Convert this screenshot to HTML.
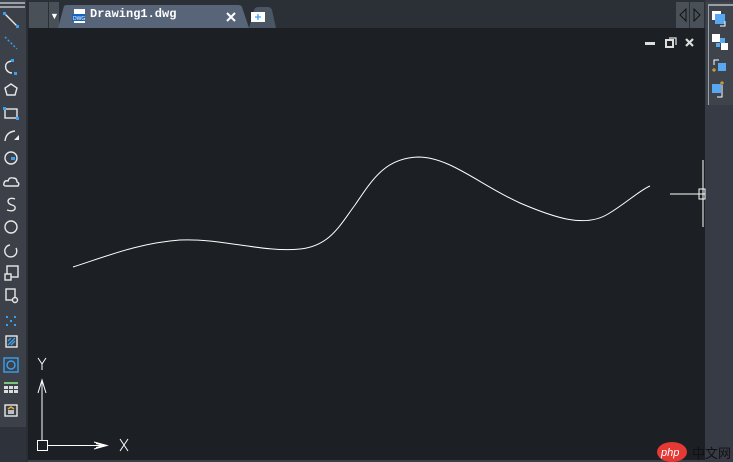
<!DOCTYPE html>
<html><head><style>
body{margin:0;width:733px;height:462px;overflow:hidden;background:#1c1f23;position:relative;font-family:"Liberation Sans",sans-serif}
.a{position:absolute}
</style></head><body>
<!-- left toolbar -->
<div class="a" style="left:0;top:0;width:26px;height:462px;background:#2e333b"></div>
<div class="a" style="left:0;top:0;width:26px;height:427px;background:#3c4149"></div>
<div class="a" style="left:0;top:2px;width:25px;height:2px;background:#9aa0a8"></div>
<div class="a" style="left:0;top:6px;width:25px;height:2px;background:#9aa0a8"></div>
<div class="a" style="left:26px;top:0;width:2px;height:462px;background:#2a2e35"></div>
<svg class="a" style="left:0;top:0" width="26" height="427" fill="none" stroke="#e8e8e8" stroke-width="1.4">
<line x1="5" y1="14" x2="17" y2="26"/><rect x="3" y="12" width="3" height="3" fill="#3aa0f0" stroke="none"/><rect x="16" y="25" width="3" height="3" fill="#3aa0f0" stroke="none"/>
<line x1="5" y1="37" x2="17" y2="49" stroke-dasharray="2 2" stroke="#3aa0f0"/>
<path d="M12 61 Q4 62 6 69 Q8 73 12 73"/><rect x="11" y="59" width="3" height="3" fill="#3aa0f0" stroke="none"/><rect x="14" y="72" width="3" height="3" fill="#3aa0f0" stroke="none"/>
<path d="M11 84 L17 88 L15 95 L7 95 L5 88 Z"/>
<rect x="5" y="109" width="12" height="9"/><rect x="3" y="107" width="3" height="3" fill="#3aa0f0" stroke="none"/><rect x="16" y="117" width="3" height="3" fill="#3aa0f0" stroke="none"/>
<path d="M5 141 Q6 132 15 131"/><path d="M14 140 L19 140 L19 135 Z" fill="#eee" stroke="none"/>
<circle cx="11" cy="158" r="6"/><rect x="11" y="157" width="4" height="3" fill="#3aa0f0" stroke="none"/>
<path d="M6 186 Q3 186 4 183 Q5 180 8 181 Q9 177 13 178 Q17 178 17 182 Q20 183 18 186 Z"/>
<path d="M15 199 Q9 197 8 201 Q8 204 12 205 Q16 206 15 209 Q13 212 7 210"/>
<ellipse cx="11" cy="227" rx="6" ry="6"/>
<path d="M16 248 A6 6 0 1 1 10 245"/>
<rect x="7" y="266" width="11" height="11"/><rect x="5" y="274" width="6" height="6" fill="#3c4149"/>
<rect x="6" y="289" width="9" height="11"/><circle cx="15" cy="300" r="2.5" fill="#3c4149"/>
<g fill="#3aa0f0" stroke="none"><rect x="6" y="316" width="2" height="2"/><rect x="14" y="316" width="2" height="2"/><rect x="10" y="320" width="2" height="2"/><rect x="6" y="324" width="2" height="2"/><rect x="14" y="324" width="2" height="2"/></g>
<rect x="6" y="336" width="11" height="11"/><path d="M8 345 L15 338 M8 341 L11 338 M11 345 L15 341" stroke="#3aa0f0"/>
<rect x="4" y="358" width="14" height="14" stroke="#3aa0f0"/><circle cx="11" cy="365" r="4" stroke="#3aa0f0"/>
<rect x="4" y="382" width="14" height="2" fill="#7cc47c" stroke="none"/>
<g fill="#ddd" stroke="none"><rect x="4" y="386" width="4" height="3"/><rect x="9" y="386" width="4" height="3"/><rect x="14" y="386" width="4" height="3"/><rect x="4" y="390" width="4" height="3"/><rect x="9" y="390" width="4" height="3"/><rect x="14" y="390" width="4" height="3"/></g>
<rect x="5" y="405" width="12" height="11"/><path d="M8 411h6M8 413h6" /><path d="M8 409 L11 407 L14 409" stroke="#f0b030"/>
</svg>
<!-- top tab bar -->
<div class="a" style="left:28px;top:0;width:677px;height:28px;background:#2b2f36"></div>
<div class="a" style="left:29px;top:2px;width:19px;height:26px;background:#4a5058"></div>
<div class="a" style="left:49px;top:2px;width:10px;height:26px;background:#4a5058"></div>
<div class="a" style="left:50px;top:11px;color:#fff;font-size:9px">▼</div>
<svg class="a" style="left:58px;top:4px" width="220" height="24">
<path d="M0 24 L6 2 Q7 1 9 1 L180 1 Q183 1 184 3 L191 24 Z" fill="#586579"/>
<path d="M191 24 L196 6 Q197 3 200 3 L210 3 Q213 3 214 6 L218 24 Z" fill="#4a5664"/>
<rect x="16" y="5" width="11" height="14" fill="#fff"/><rect x="14" y="10" width="13" height="7" fill="#1565c0"/>
<text x="15" y="16" font-size="5" fill="#fff" font-family="Liberation Sans">DWG</text>
<path d="M169 9 L177 17 M177 9 L169 17" stroke="#fff" stroke-width="2"/>
<rect x="193" y="8" width="14" height="10" fill="#fff"/><path d="M200 10 V16 M197 13 H203" stroke="#3aa0f0" stroke-width="1.3"/>
</svg>
<div class="a" style="left:90px;top:7px;color:#fff;font-size:12px;font-weight:bold;font-family:'Liberation Mono',monospace;letter-spacing:0px">Drawing1.dwg</div>
<!-- right of tabbar -->
<div class="a" style="left:676px;top:2px;width:13px;height:26px;background:#4a5058"></div>
<div class="a" style="left:690px;top:2px;width:14px;height:26px;background:#4a5058"></div>
<svg class="a" style="left:676px;top:2px" width="30" height="26" fill="none" stroke="#111" stroke-width="1"><path d="M10 7 L4 13 L10 19 Z"/><path d="M18 7 L24 13 L18 19 Z"/></svg>
<!-- window controls -->
<svg class="a" style="left:640px;top:34px" width="60" height="16">
<rect x="5" y="8" width="10" height="3" fill="#ddd"/>
<rect x="26" y="6" width="7" height="7" fill="none" stroke="#ddd" stroke-width="2"/><path d="M29 4 H36 V11" fill="none" stroke="#ddd" stroke-width="1.3"/>
<path d="M46 5 L53 12 M53 5 L46 12" stroke="#ddd" stroke-width="2.2"/>
</svg>
<!-- right panel -->
<div class="a" style="left:705px;top:0;width:28px;height:462px;background:#363b45"></div>
<div class="a" style="left:706px;top:2px;width:27px;height:103px;background:#3e434c"></div>
<div class="a" style="left:708px;top:4px;width:25px;height:2px;background:#9aa0a8"></div>
<div class="a" style="left:708px;top:6px;width:1px;height:99px;background:#9aa0a8"></div>
<svg class="a" style="left:709px;top:8px" width="24" height="95">
<rect x="3" y="3" width="9" height="9" fill="#fff"/><rect x="6" y="6" width="10" height="10" fill="#57a8f0"/><path d="M16 13 V18 H11" stroke="#fff" fill="none"/>
<rect x="3" y="26" width="8" height="8" fill="#fff"/><rect x="11" y="30" width="5" height="5" fill="#57a8f0"/><rect x="7" y="35" width="4" height="4" fill="#57a8f0"/><rect x="12" y="35" width="7" height="7" fill="#fff"/>
<path d="M5 57 V52 H10" stroke="#fff" fill="none"/><rect x="9" y="55" width="8" height="8" fill="#57a8f0"/><path d="M3 62 H7 M5 60 V64" stroke="#f0b030"/>
<rect x="3" y="76" width="9" height="9" fill="#57a8f0"/><path d="M13 77 V89 H8" stroke="#fff" fill="none"/><path d="M13 73 V77 M11 75 H15" stroke="#f0b030"/>
</svg>
<!-- drawing -->
<svg class="a" style="left:0;top:0" width="733" height="462" fill="none" stroke="#fff" stroke-width="1">
<path d="M73 267 C110 255 140 243 180 240 C220 238 265 253 300 249 C330 246 340 225 355 205 C372 180 385 158 418 157 C450 157 480 185 520 203 C555 218 585 228 608 214 C625 204 640 190 650 186"/>
<path d="M703 160 V227 M670 194 H700"/><rect x="699" y="189" width="6" height="10"/><path d="M699 194 H705"/>
<path d="M42 440 V381 M38 393 L42 380 L46 393 M42 380 V393"/>
<rect x="37.5" y="440.5" width="10" height="10"/><path d="M48 445.5 H107 M94 442 L107 445.5 L94 449 M96 443.5 L104 445.5 L96 447.5"/>
<path d="M38 358 L42 364 L46 358 M42 364 V370"/>
<path d="M120 439 L128 451 M128 439 L120 451"/>
</svg>
<div class="a" style="left:28px;top:460px;width:677px;height:2px;background:#3a3f47"></div>
<!-- watermark -->
<svg class="a" style="left:650px;top:440px" width="83" height="22">
<ellipse cx="22" cy="12" rx="15" ry="10" fill="#e53935"/>
<text x="11" y="16" font-size="11" font-style="italic" fill="#fff" font-family="Liberation Sans">php</text>
<text x="42" y="18" font-size="13" fill="#111" font-family="Liberation Sans,Noto Sans CJK SC,sans-serif">中文网</text>
</svg>
</body></html>
